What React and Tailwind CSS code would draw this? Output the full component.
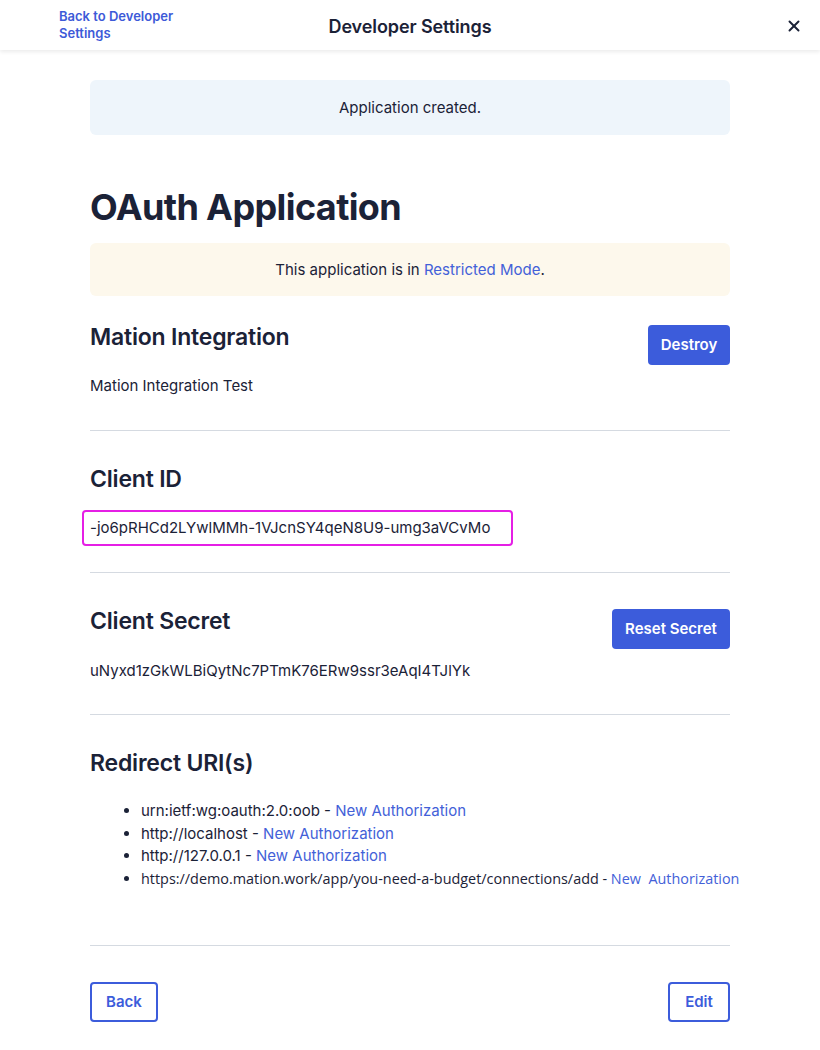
import React from 'react';
import { X } from 'lucide-react';

const font = { fontFamily: 'Inter, "Noto Sans", sans-serif' };

const uris = [
  'urn:ietf:wg:oauth:2.0:oob',
  'http://localhost',
  'http://127.0.0.1',
];

const App = () => {
  return (
    <div className="min-h-screen bg-white text-[#1b2237]" style={font}>
      {/* Header */}
      <header className="h-[50px] grid grid-cols-[1fr_auto_1fr] items-center bg-white shadow-[0_2px_4px_rgba(0,0,0,0.08)]">
        <div className="pl-[59px]">
          <a href="#" className="block w-[130px] text-[13px] leading-[17px] font-semibold text-[#3d5ad8]">
            Back to Developer Settings
          </a>
        </div>
        <h1 className="pt-[3px] text-[18px] font-semibold tracking-[-0.1px]">Developer Settings</h1>
        <div className="flex justify-end pr-[17px] pt-[2px]">
          <X size={18} strokeWidth={2.6} className="text-[#1b2237]" />
        </div>
      </header>

      <main className="w-[640px] mx-auto pb-10">
        {/* Success alert */}
        <div className="mt-[30px] h-[55px] rounded-md bg-[#eef5fb] flex items-center justify-center pt-[2px] text-[15px]">
          Application created.
        </div>

        <h2 className="mt-[49px] text-[36px] leading-[46px] font-bold tracking-[-0.6px]">OAuth Application</h2>

        {/* Restricted notice */}
        <div className="mt-[13px] h-[53px] rounded-md bg-[#fdf8ec] flex items-center justify-center pt-[2px] text-[15px]">
          <span>
            This application is in <a href="#" className="text-[#4361d8]">Restricted Mode</a>.
          </span>
        </div>

        {/* Name */}
        <div className="mt-[24px] flex items-start justify-between">
          <h3 className="pt-[1px] text-[23px] leading-[32px] font-semibold tracking-[-0.2px]">Mation Integration</h3>
          <button className="mt-[5px] h-[40px] w-[82px] rounded bg-[#3c5cdb] text-white text-[15px] font-semibold">
            Destroy
          </button>
        </div>
        <p className="mt-[10px] text-[15px] leading-[22px]">Mation Integration Test</p>

        <hr className="mt-[33px] border-[#d5dae1]" />

        {/* Client ID */}
        <h3 className="mt-[32px] text-[23px] leading-[32px] font-semibold tracking-[-0.2px]">Client ID</h3>
        <div className="mt-[15px] -ml-2 w-[431px] h-[36px] border-2 border-[#e51fe5] rounded-sm flex items-center pl-[6px] text-[15px]">
          -jo6pRHCd2LYwlMMh-1VJcnSY4qeN8U9-umg3aVCvMo
        </div>

        <hr className="mt-[26px] border-[#d5dae1]" />

        {/* Client Secret */}
        <div className="mt-[31px] flex items-start justify-between">
          <h3 className="pt-[1px] text-[23px] leading-[32px] font-semibold tracking-[-0.2px]">Client Secret</h3>
          <button className="mt-[5px] h-[40px] w-[118px] rounded bg-[#3c5cdb] text-white text-[15px] font-semibold">
            Reset Secret
          </button>
        </div>
        <p className="mt-[11px] text-[15px] leading-[22px]">uNyxd1zGkWLBiQytNc7PTmK76ERw9ssr3eAqI4TJlYk</p>

        <hr className="mt-[32px] border-[#d5dae1]" />

        {/* Redirect URIs */}
        <h3 className="mt-[32px] text-[23px] leading-[32px] font-semibold tracking-[-0.2px]">Redirect URI(s)</h3>
        <ul className="mt-[21px] list-disc pl-[51px] text-[15px] leading-[22.7px] whitespace-nowrap">
          {uris.map((u) => (
            <li key={u}>
              {u} - <a href="#" className="text-[#4361d8]">New Authorization</a>
            </li>
          ))}
          <li style={{ fontFamily: '"Open Sans", sans-serif' }} className="text-[14.4px]">
            https://demo.mation.work/app/you-need-a-budget/connections/add - <a href="#" className="text-[#4361d8]">New&nbsp; Authorization</a>
          </li>
        </ul>

        <hr className="mt-[54px] border-[#d5dae1]" />

        {/* Footer buttons */}
        <div className="mt-[36px] flex justify-between">
          <button className="h-[40px] w-[68px] rounded border-2 border-[#3c5cdb] text-[#3c5cdb] text-[15px] font-semibold">
            Back
          </button>
          <button className="h-[40px] w-[62px] rounded border-2 border-[#3c5cdb] text-[#3c5cdb] text-[15px] font-semibold">
            Edit
          </button>
        </div>
      </main>
    </div>
  );
};

export default App;
